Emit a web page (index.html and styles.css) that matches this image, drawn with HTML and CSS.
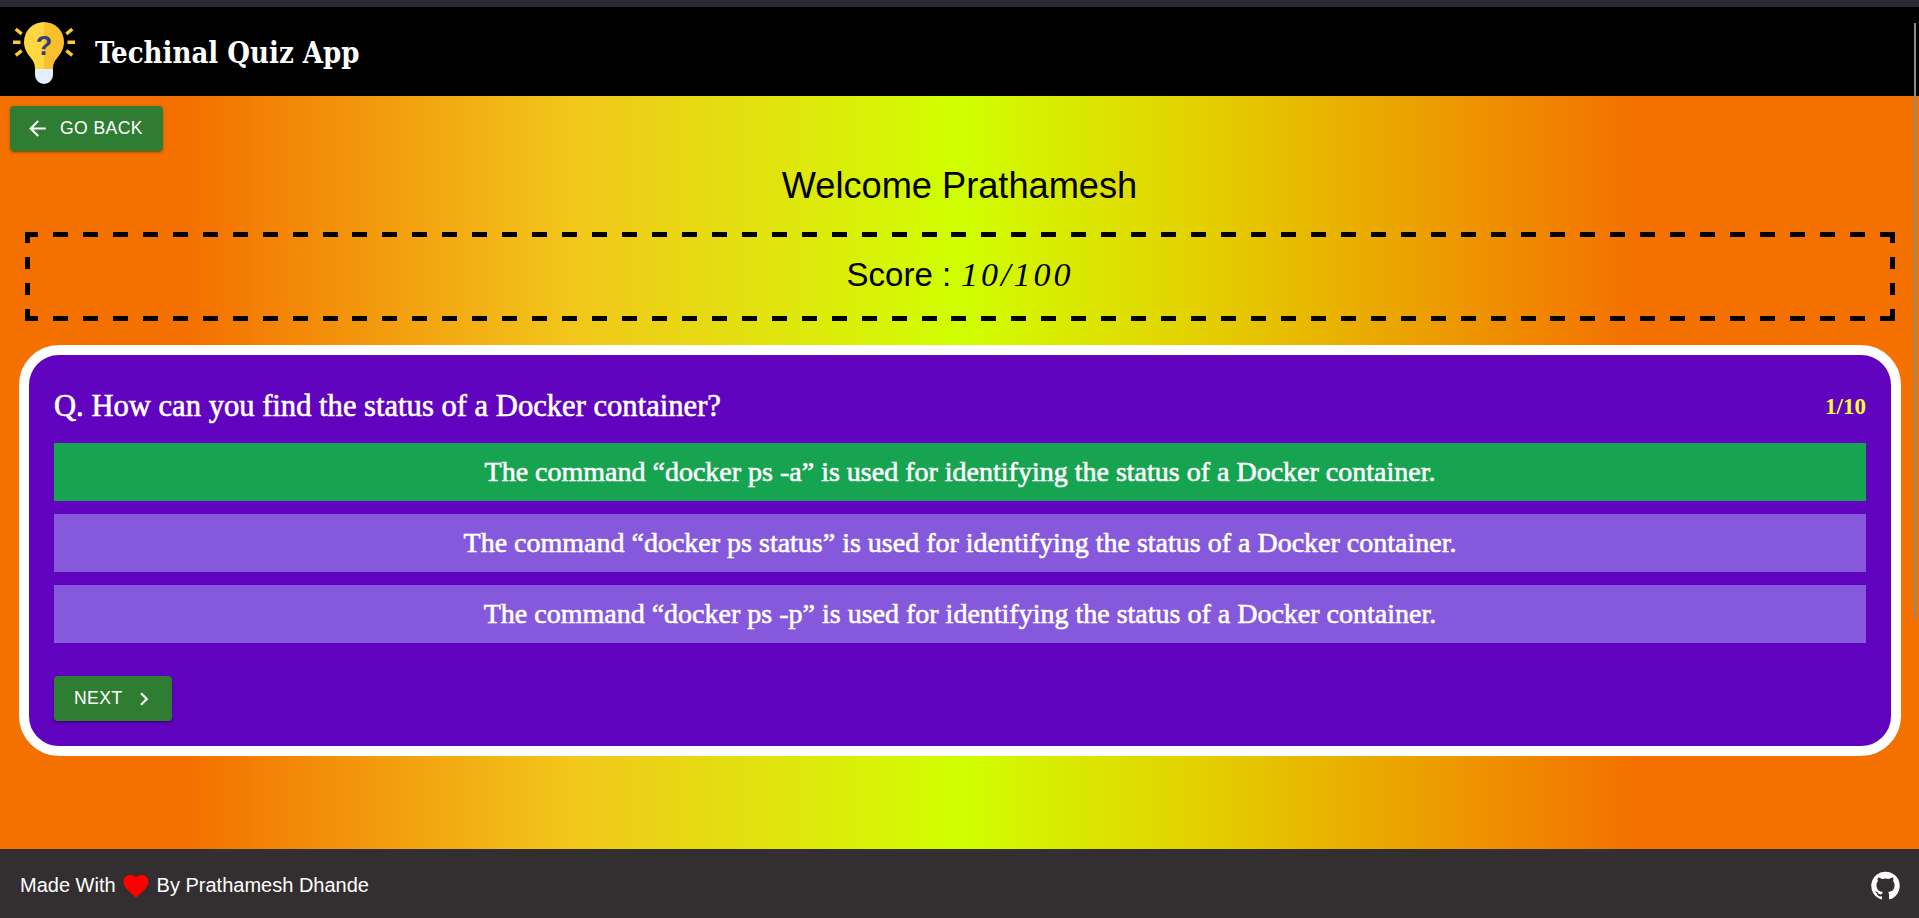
FILE: index.html
```html
<!DOCTYPE html>
<html lang="en">
<head>
<meta charset="utf-8">
<title>Techinal Quiz App</title>
<link rel="stylesheet" href="styles.css">
</head>
<body>
<div class="browser-strip"></div>
<header class="app-bar">
  <svg class="logo" viewBox="0 0 62 62" aria-hidden="true">
    <g fill="#ffc933">
      <rect x="0" y="18.500" width="7.500" height="3.500"/>
      <rect x="54.500" y="18.500" width="7.500" height="3.500"/>
      <path d="M3.700 5.700l6 4.800-2 2.700-6-4.800z"/>
      <path d="M58.300 5.700l-6 4.800 2 2.700 6-4.800z"/>
      <path d="M3.700 34.800l6-4.800-2-2.700-6 4.800z"/>
      <path d="M58.300 34.800l-6-4.800 2-2.700 6 4.800z"/>
    </g>
    <path d="M31 0a20 20 0 0 0-20 20c0 7 3.500 11.500 6.500 15.500 2.500 3 4.500 6 4.500 11.500h9z" fill="#ffd740"/>
    <path d="M31 0a20 20 0 0 1 20 20c0 7-3.500 11.500-6.500 15.500-2.500 3-4.500 6-4.500 11.500h-9z" fill="#fbbf2d"/>
    <path d="M22 47h18v6a9 9 0 0 1-18 0z" fill="#e3efff"/>
    <text class="logo-mark" x="31" y="33" text-anchor="middle">?</text>
  </svg>
  <h1 class="app-title">Techinal Quiz App</h1>
</header>

<main class="content">
  <div class="back-row">
    <button class="btn back" type="button">
      <svg class="btn-icon" viewBox="0 0 24 24" aria-hidden="true"><path d="M20 11H7.830l5.590-5.590L12 4l-8 8 8 8 1.410-1.410L7.830 13H20z"/></svg>
      GO BACK
    </button>
  </div>
  <h2 class="welcome">Welcome Prathamesh</h2>
  <div class="score">Score : <em class="score-value">10/100</em></div>
  <section class="card">
    <div class="question-row">
      <h3 class="question">Q. How can you find the status of a Docker container?</h3>
      <span class="count">1/10</span>
    </div>
    <div class="options">
      <div class="option correct">The command “docker ps -a” is used for identifying the status of a Docker container.</div>
      <div class="option">The command “docker ps status” is used for identifying the status of a Docker container.</div>
      <div class="option">The command “docker ps -p” is used for identifying the status of a Docker container.</div>
    </div>
    <button class="btn next" type="button">
      NEXT
      <svg class="btn-icon" viewBox="0 0 24 24" aria-hidden="true"><path d="M10 6L8.590 7.410 13.170 12l-4.580 4.590L10 18l6-6z"/></svg>
    </button>
  </section>
</main>

<footer class="footer">
  <div class="made">
    Made With
    <svg class="heart" viewBox="0 0 24 24" aria-hidden="true"><path d="M12 21.350l-1.450-1.320C5.400 15.360 2 12.280 2 8.500 2 5.420 4.420 3 7.500 3c1.740 0 3.410.81 4.500 2.090C13.090 3.810 14.760 3 16.500 3 19.580 3 22 5.420 22 8.500c0 3.780-3.400 6.860-8.550 11.540z"/></svg>
    By Prathamesh Dhande
  </div>
  <svg class="github" viewBox="0 0 24 24" aria-hidden="true"><path d="M12 1.270a11 11 0 0 0-3.480 21.440c.55.100.75-.24.750-.53v-1.870c-3.060.66-3.710-1.480-3.710-1.480-.5-1.270-1.220-1.610-1.220-1.610-1-.68.080-.67.080-.67 1.100.08 1.680 1.130 1.680 1.130.98 1.680 2.570 1.190 3.200.91.100-.71.380-1.190.70-1.470-2.440-.28-5.010-1.220-5.010-5.430 0-1.200.43-2.180 1.130-2.950-.11-.28-.49-1.400.11-2.910 0 0 .92-.3 3.020 1.130a10.500 10.500 0 0 1 5.500 0c2.100-1.430 3.020-1.130 3.020-1.130.6 1.510.22 2.630.11 2.910.7.770 1.130 1.750 1.130 2.950 0 4.220-2.570 5.150-5.020 5.420.4.340.75 1.010.75 2.040v3.020c0 .29.2.64.76.53A11 11 0 0 0 12 1.270z"/></svg>
</footer>
<div class="scroll-thumb"></div>
</body>
</html>
```
FILE: styles.css
```css
* { box-sizing: border-box; }
html, body { margin: 0; height: 100%; overflow: hidden; }
body {
  display: flex;
  flex-direction: column;
  height: 918px;
  font-family: "Liberation Sans", Arial, sans-serif;
  background: linear-gradient(to right, #f47100 0%, #f47100 10%, #f2c71b 30%, #d0ff00 50%, #e3d200 62%, #f47100 85%, #f47100 100%);
}
.browser-strip { height: 7px; background: #2b2a33; flex: none; }
.app-bar {
  height: 89px;
  flex: none;
  background: #000;
  display: flex;
  align-items: center;
  padding-left: 13px;
  gap: 20px;
}
.logo { width: 62px; height: 62px; margin-top: 3px; }
.logo-mark { font: 700 27px "Liberation Sans", sans-serif; fill: #323f7f; }
.app-title {
  margin: 0;
  padding-top: 2px;
  font: 700 29px "DejaVu Serif Condensed", "DejaVu Serif", serif;
  color: #fff;
}
.content { flex: 1; min-height: 0; }
.back-row { padding: 10px 10px 0; }
.btn {
  display: inline-flex;
  align-items: center;
  height: 45px;
  border: 0;
  border-radius: 4px;
  background: #2e7d32;
  color: #fff;
  font: 400 17.6px "Liberation Sans", sans-serif;
  letter-spacing: .4px;
  text-transform: uppercase;
  box-shadow: 0 3px 1px -2px rgba(0,0,0,.2), 0 2px 2px rgba(0,0,0,.14), 0 1px 5px rgba(0,0,0,.12);
}
.back { padding: 0 20px 0 15px; gap: 10px; }
.back .btn-icon { width: 25px; height: 25px; }
.btn-icon { fill: currentColor; flex: none; }
.welcome {
  margin: 10px 0 0;
  text-align: center;
  font: 400 36.2px/50px "Liberation Sans", sans-serif;
  color: #000;
}
.score {
  margin: 21px 24px 0 25px;
  height: 89px;
  padding-bottom: 4px;
  display: flex;
  align-items: center;
  justify-content: center;
  gap: .3em;
  font-size: 33px;
  color: #000;
  background-repeat: no-repeat;
  background-image:
    repeating-linear-gradient(to right, #000 -2px, #000 13px, transparent 13px, transparent 27.950px),
    repeating-linear-gradient(to right, #000 -2px, #000 13px, transparent 13px, transparent 27.950px),
    repeating-linear-gradient(to bottom, #000 -1px, #000 11px, transparent 11px, transparent 25px),
    repeating-linear-gradient(to bottom, #000 -1px, #000 11px, transparent 11px, transparent 25px);
  background-size: 100% 5px, 100% 5px, 5px 100%, 5px 100%;
  background-position: top, bottom, left, right;
}
.score-value { font: italic 400 34px "Liberation Serif", serif; letter-spacing: 3px; }
.card {
  margin: 24px 18px 0 19px;
  height: 411px;
  border: 10px solid #fff;
  border-radius: 40px;
  background: #6104c0;
  padding: 25px 25px 0;
}
.question-row {
  display: flex;
  justify-content: space-between;
  align-items: center;
  height: 53px;
  margin-bottom: 10px;
}
.question {
  margin: 0;
  font: 400 30.6px "Liberation Serif", serif;
  -webkit-text-stroke: .6px #fff;
  color: #fff;
}
.count { font: 700 23px "Liberation Serif", serif; color: #ffff33; }
.options { display: flex; flex-direction: column; gap: 13px; }
.option {
  height: 58px;
  display: flex;
  align-items: center;
  justify-content: center;
  background: #8558dc;
  color: #fff;
  font: 400 28px "Liberation Serif", serif;
  -webkit-text-stroke: .6px #fff;
}
.option.correct { background: #16a450; }
.next { margin-top: 33px; padding: 0 15px 0 20px; gap: 8px; }
.next .btn-icon { width: 26px; height: 26px; }
.footer {
  height: 69px;
  flex: none;
  background: #332f30;
  color: #fff;
  display: flex;
  align-items: center;
  justify-content: space-between;
  padding: 3px 18px 0 20px;
  font-size: 20px;
}
.made { display: flex; align-items: center; gap: 5.500px; }
.heart { width: 30px; height: 30px; margin-top: 2px; fill: #ff0000; }
.github { width: 31px; height: 31px; fill: #fff; }
.scroll-thumb {
  position: absolute;
  top: 23px;
  right: 3px;
  width: 2px;
  height: 595px;
  background: #8a8a8a;
}
```
